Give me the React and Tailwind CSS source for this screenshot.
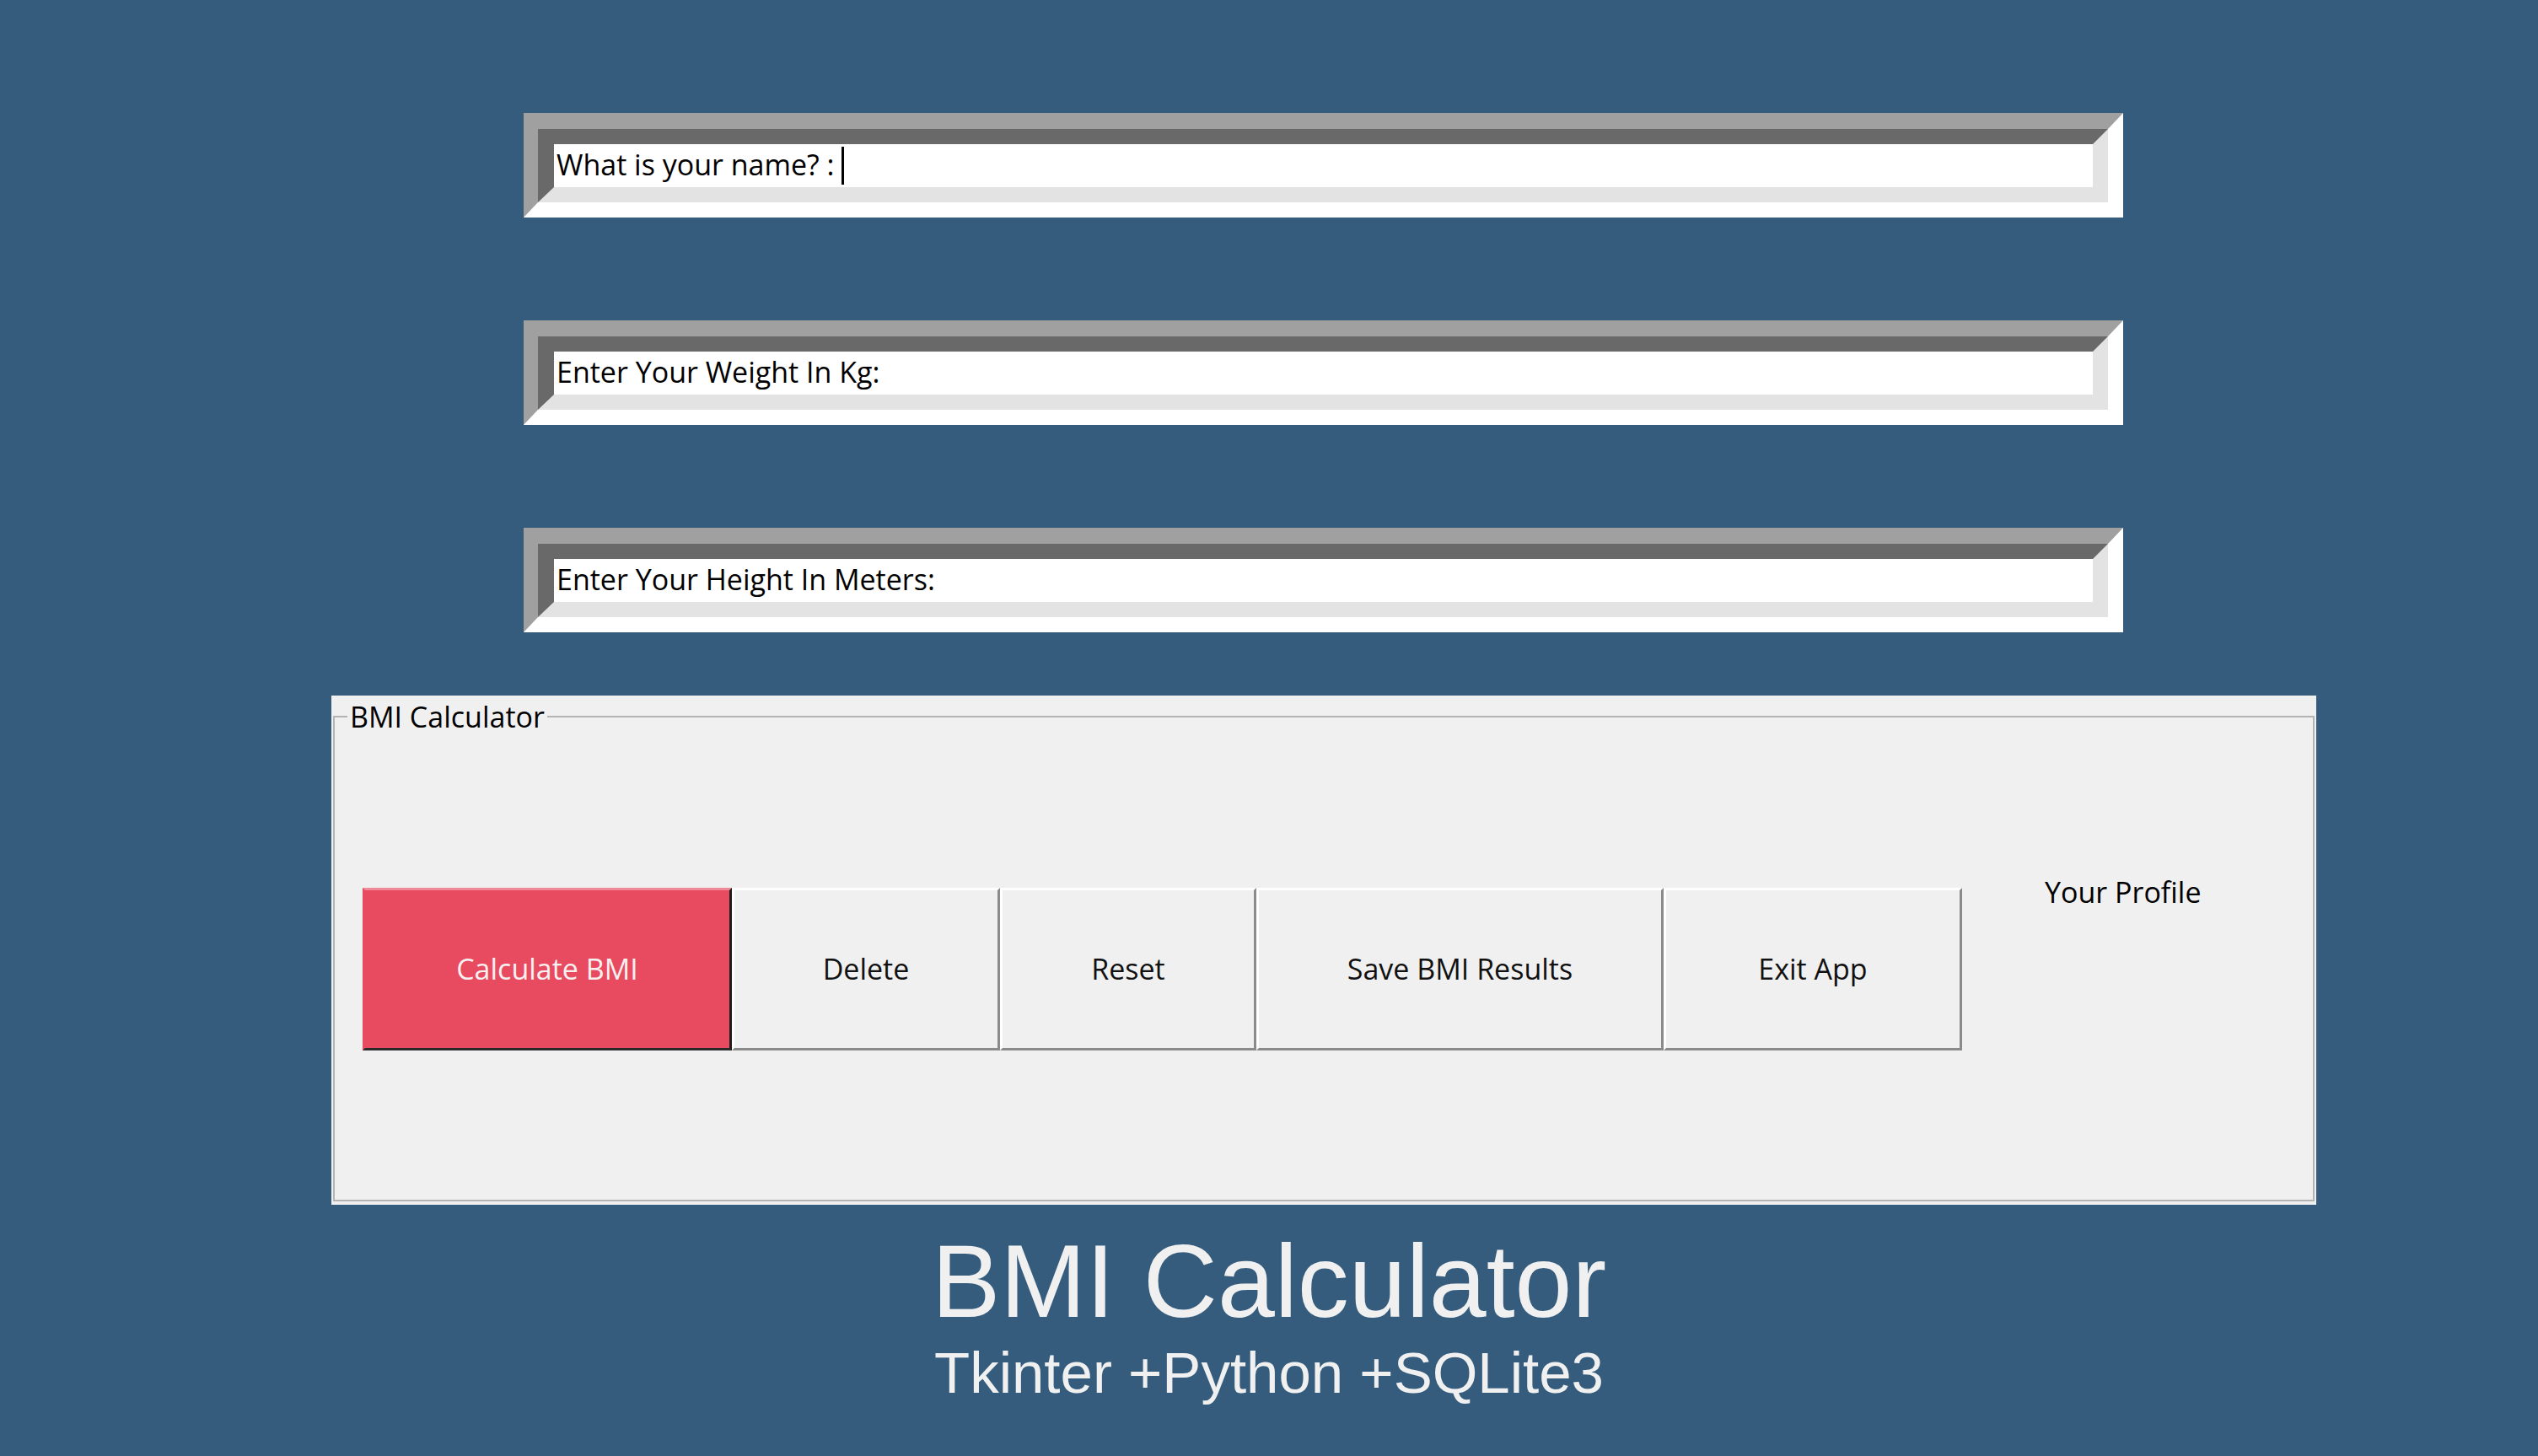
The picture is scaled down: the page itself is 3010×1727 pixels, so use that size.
import React from 'react';

const entries = [
    { label: 'What is your name? :\u00a0', caret: true },
    { label: 'Enter Your Weight In Kg:' },
    { label: 'Enter Your Height In Meters:' },
];

const buttons = [
    { label: 'Calculate BMI', width: 'w-[438px]', primary: true },
    { label: 'Delete', width: 'w-[318px]' },
    { label: 'Reset', width: 'w-[304px]' },
    { label: 'Save BMI Results', width: 'w-[483px]' },
    { label: 'Exit App', width: 'w-[354px]' },
];

function BevelEntry({ label, caret }) {
    // tk Entry with a big bd: two bevel rings, mitred corners come from css borders
    return (
        <div className="ml-[228px] w-[1897px] border-t-[19px] border-l-[17px] border-r-[18px] border-b-[18px] border-t-[#a0a0a0] border-l-[#a0a0a0] border-r-white border-b-white">
            <div className="border-t-[18px] border-l-[19px] border-r-[18px] border-b-[18px] border-t-[#696969] border-l-[#696969] border-r-[#e3e3e3] border-b-[#e3e3e3] bg-white">
                <div className="h-[51px] pl-[3px] flex items-center text-[34px] text-black">
                    <span className="mb-[3px] whitespace-pre">{label}</span>
                    {caret && <span className="w-[3px] h-[45px] bg-black"></span>}
                </div>
            </div>
        </div>
    );
}

function TkButton({ label, width, primary }) {
    const look = primary
        ? 'bg-[#e84a5f] text-[#f6f0f0] border-t-[#f08a98] border-l-[#e84a5f] border-r-[#1e1e1e] border-b-[#2a2a2a]'
        : 'bg-[#f0f0f0] text-[#111] border-t-white border-l-white border-r-[#8a8a8a] border-b-[#8a8a8a]';
    return (
        <button className={`${width} h-[193px] border-[3px] flex items-center justify-center text-[34px] ${look}`}>
            {label}
        </button>
    );
}

export default function App() {
    return (
        <div className="w-[3010px] h-[1727px] overflow-hidden bg-[#355c7d] pt-[134px] font-['Open_Sans',sans-serif]">
            <div className="ml-[393px] w-[2354px] flex flex-col">
                <div className="flex flex-col gap-[122px]">
                    {entries.map((e) => (
                        <BevelEntry key={e.label} {...e} />
                    ))}
                </div>

                <div className="mt-[75px] h-[604px] bg-[#f0f0f0] pt-[8px] pl-[2px] pr-[2px] pb-[4px]">
                    <fieldset className="h-[592px] border-2 border-[#b4b4b4] pl-[15px]">
                        <legend className="px-[3px] text-[34px] leading-[34px] text-black">BMI Calculator</legend>
                        <div className="mt-[166px] ml-[18px] flex items-start">
                            <div className="mt-[20px] flex">
                                {buttons.map((b) => (
                                    <TkButton key={b.label} {...b} />
                                ))}
                            </div>
                            <span className="ml-[98px] text-[34px] text-black">Your Profile</span>
                        </div>
                    </fieldset>
                </div>
            </div>

            <div className="mt-[30px] text-center text-[#f0f0f0] font-['Liberation_Sans',Arial,sans-serif]">
                <div className="text-[122px] leading-none">BMI Calculator</div>
                <div className="mt-[13px] text-[69px] leading-none">Tkinter +Python +SQLite3</div>
            </div>
        </div>
    );
}
